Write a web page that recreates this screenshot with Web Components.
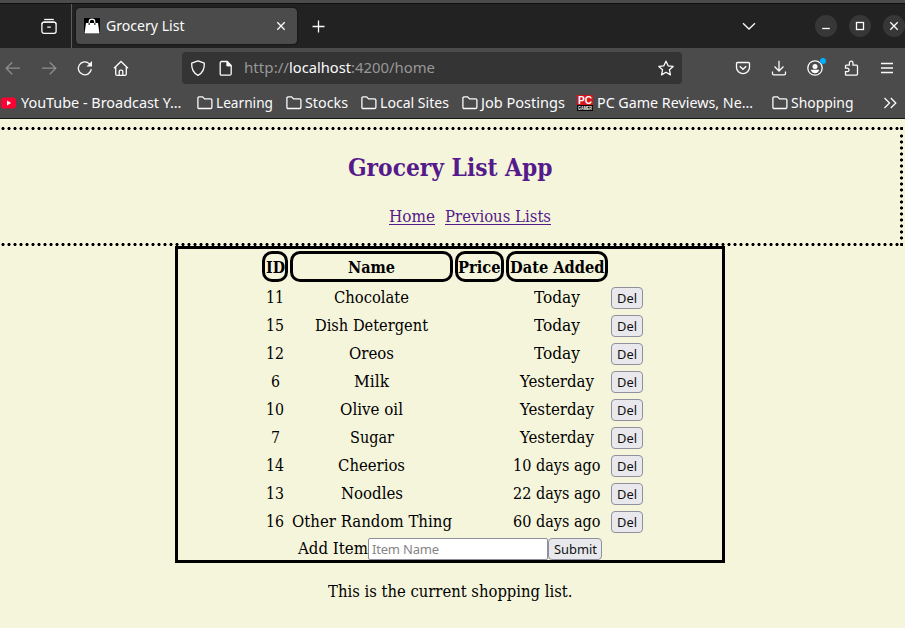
<!DOCTYPE html>
<html lang="en">
<head>
<meta charset="utf-8">
<title>Grocery List</title>
<style>
html,body{margin:0;height:100%;overflow:hidden;background:#f5f5dc}
</style>
</head>
<body>
<browser-window></browser-window>
<script>
const ICONS = {
  view: '<path d="M3.2 1.5h9.6"/><rect x=".9" y="4.2" width="14.2" height="11.1" rx="2"/><path d="M6.2 9.2h3.6M1 6.2Q1.2 4.2 3 4.2h10q1.800 0 2 2"/>',
  bag: '<rect width="16" height="16" fill="#000" stroke="none"/><path d="M2 5h12l1.500 10.500H.5z" fill="#fff" stroke="none"/><path d="M5.200 6.500V4a2.800 2.800 0 0 1 5.600 0v2.500" stroke="#fff" stroke-width="1.200"/><path d="M5.200 5.300v1.400M10.800 5.300v1.400" stroke="#000" stroke-width="1.400"/>',
  close: '<path d="M4.300 4.300l7.400 7.400M11.700 4.300l-7.400 7.400"/>',
  plus: '<path d="M8.500 2.500v12M2.500 8.500h12"/>',
  chev: '<path d="M2 5.300l6 5.700 6-5.700"/>',
  min: '<path d="M4.200 10.500h7.600"/>',
  max: '<rect x="4.500" y="4.500" width="7" height="7"/>',
  back: '<path d="M15 8.200H1.500M7.200 2.200l-6 6 6 6"/>',
  fwd: '<path d="M1 8.200h13.500M8.800 2.200l6 6-6 6"/>',
  reload: '<path d="M14.300 9.200A6.500 6.500 0 1 1 12.300 3.600L14 5.300"/><path d="M15 1v5.500H9.500z" fill="currentColor" stroke="none"/>',
  home: '<path d="M1 8.300L8 1.500l7 6.800M2.700 7v6.900q0 1.400 1.400 1.400h7.800q1.400 0 1.400-1.400V7M6.200 15v-3.600q0-1.300 1.300-1.300h1q1.300 0 1.300 1.300V15"/>',
  shield: '<path d="M8 .9L14.300 3.200q.5 8.600-6.300 12.100Q1.200 11.800 1.700 3.200z" stroke-linejoin="round"/>',
  page: '<path d="M3.700 1.500h5.500l4 4v8.200q0 1.500-1.500 1.500h-8q-1.500 0-1.500-1.500V3q0-1.500 1.500-1.500z"/><path d="M8.800 1.500v4.500h4.400z" fill="currentColor" stroke-width=".8"/>',
  star: '<path d="M8 1.200l2.150 4.600 5 .6-3.700 3.450 1 5L8 12.300l-4.450 2.550 1-5L.850 6.400l5-.6z" stroke-linejoin="round"/>',
  pocket: '<path d="M2.500 2.500h11q1 0 1 1v3.700a6.500 6.500 0 0 1-13 0V3.500q0-1 1-1z"/><path d="M4.800 6.300L8 9.300l3.200-3" stroke-width="1.500"/>',
  download: '<path d="M8 .8v10M3.500 6.500L8 11l4.500-4.500M1.500 11.500v1.900q0 1.400 1.400 1.400h10.200q1.400 0 1.400-1.400v-1.900"/>',
  account: '<circle cx="8" cy="8" r="7.200"/><circle cx="8" cy="6.400" r="2.500" fill="currentColor" stroke="none"/><path d="M3.700 9.700h8.600Q11 13.200 8 13.200T3.700 9.700z" fill="currentColor" stroke="none"/><circle cx="16" cy="1" r="3" fill="#00aefc" stroke="none"/>',
  puzzle: '<path d="M3 15.200q-.5 0-.5-.6v-3h1.800a1.700 1.700 0 0 0 0-3.400H2.500V6q0-.9.900-.9h3V3a1.800 1.800 0 0 1 3.600 0v2.100h3.500q1 0 1 1v8q0 1-1 1z"/>',
  menu: '<path d="M2 3.500h12M2 8h12M2 12.500h12"/>',
  folder: '<path d="M2.200 1.900h3.400l2 2h6q1.300 0 1.300 1.300v7q0 1.300-1.300 1.300H2.200Q.9 13.500.9 12.200v-9Q.9 1.900 2.200 1.900z"/>',
  more: '<path d="M2.500 3l5 5-5 5M8.800 3l5 5-5 5"/>',
  youtube: '<rect x="0" y="2.500" width="15" height="11" rx="3" fill="#ff0033" stroke="none"/><path d="M6 5.600L10.200 8 6 10.400z" fill="#fff" stroke="none"/>'
};

class UiIcon extends HTMLElement {
  connectedCallback() {
    this.attachShadow({mode:'open'}).innerHTML = `<style>:host{display:block;flex:none;width:16px;height:16px}svg{display:block;overflow:visible}</style>
    <svg width="16" height="16" viewBox="0 0 16 16" fill="none" stroke="currentColor" stroke-width="1.3">${ICONS[this.getAttribute('name')]}</svg>`;
  }
}
customElements.define('ui-icon', UiIcon);

/* One line of text set to an exact measure. */
class FitText extends HTMLElement {
  connectedCallback() {
    const r = this.attachShadow({mode:'open'});
    r.innerHTML = `<style>:host{display:inline-block;flex:none;white-space:nowrap;text-align:left}span{display:inline-block;transform-origin:0 50%}</style><span><slot></slot></span>`;
    const w = +this.getAttribute('w'), s = r.querySelector('span');
    const n = s.getBoundingClientRect().width;
    this.style.width = w + 'px';
    if (n) s.style.transform = `scaleX(${w / n})`;
  }
}
customElements.define('fit-text', FitText);

class BrowserTabs extends HTMLElement {
  connectedCallback() {
    this.attachShadow({mode:'open'}).innerHTML = `<style>
    :host{display:flex;align-items:center;background:#222;border-top:1px solid #0f0f0f;box-sizing:border-box;height:45px;color:#fbfbfe;margin-top:3px}
    .view{margin:0 14px 0 41px}
    .sep{width:1px;height:44px;background:#5c5c5c;margin-right:4px}
    .tab{display:flex;align-items:center;width:221px;height:36px;box-sizing:border-box;background:#4b4b4b;border-radius:4px;padding:0 8px;box-shadow:0 0 2px #000;font-size:14.5px}
    .tab fit-text{margin-left:5.5px;margin-right:auto;padding-bottom:2px}
    .plus{margin-left:13px}
    .chev{margin-left:auto;margin-right:58px}
    .ctl{display:flex;gap:12px;width:90px}
    .ctl div{width:22px;height:22px;flex:none;border-radius:50%;background:#373737;display:grid;place-items:center}
    </style><ui-icon class="view" name="view"></ui-icon><div class="sep"></div>
    <div class="tab"><ui-icon name="bag"></ui-icon><fit-text w="78.500">Grocery List</fit-text><ui-icon name="close"></ui-icon></div>
    <ui-icon class="plus" name="plus"></ui-icon><ui-icon class="chev" name="chev"></ui-icon>
    <div class="ctl"><div><ui-icon name="min"></ui-icon></div><div><ui-icon name="max"></ui-icon></div><div><ui-icon name="close"></ui-icon></div></div>`;
  }
}
customElements.define('browser-tabs', BrowserTabs);

class NavBar extends HTMLElement {
  connectedCallback() {
    this.attachShadow({mode:'open'}).innerHTML = `<style>
    :host{display:flex;height:40px;align-items:center;color:#fbfbfe;padding:0 10px 0 5px;box-sizing:border-box}
    .g{display:flex;gap:20px}.dim{color:#8e8e8e}
    .url{display:flex;align-items:center;width:500px;height:32px;box-sizing:border-box;margin:0 auto 0 53px;padding:0 8px;background:#343434;border-radius:4px;font-size:14.5px}
    .url ui-icon+ui-icon{margin:0 10px 0 12px}
    .addr{display:flex;color:#979797;margin-right:auto;padding-bottom:2px}.addr .h{color:#fbfbfe}
    </style><div class="g"><ui-icon class="dim" name="back"></ui-icon><ui-icon class="dim" name="fwd"></ui-icon><ui-icon name="reload"></ui-icon><ui-icon name="home"></ui-icon></div>
    <div class="url"><ui-icon name="shield"></ui-icon><ui-icon name="page"></ui-icon><div class="addr"><fit-text w="45">http://</fit-text><fit-text class="h" w="62">localhost</fit-text><fit-text w="84">:4200/home</fit-text></div><ui-icon name="star"></ui-icon></div>
    <div class="g"><ui-icon name="pocket"></ui-icon><ui-icon name="download"></ui-icon><ui-icon name="account"></ui-icon><ui-icon name="puzzle"></ui-icon><ui-icon name="menu"></ui-icon></div>`;
  }
}
customElements.define('nav-bar', NavBar);

class PcBadge extends HTMLElement {
  connectedCallback() {
    this.attachShadow({mode:'open'}).innerHTML = `<style>:host{display:block;width:16px;height:16px;flex:none;background:linear-gradient(#d8141c 10.500px,#080808 10.500px);color:#fff;font-weight:bold;font-family:"Liberation Sans",sans-serif}
    div{display:flex;justify-content:center}.a{font-size:11px;line-height:11px;height:11px}.b{font-size:4.500px;line-height:5px;height:5px}</style><div class="a"><fit-text w="14">PC</fit-text></div><div class="b"><fit-text w="14">GAMER</fit-text></div>`;
  }
}
customElements.define('pc-badge', PcBadge);

class BookmarkItem extends HTMLElement {
  connectedCallback() {
    const i = this.getAttribute('icon') || 'folder';
    this.attachShadow({mode:'open'}).innerHTML = `<style>:host{display:flex;align-items:center;gap:${i === 'folder' ? 3 : 3.5}px;flex:none;width:var(--w)}fit-text{padding-bottom:2px}</style>
    ${i === 'pc' ? '<pc-badge></pc-badge>' : `<ui-icon name="${i}"></ui-icon>`}<fit-text w="${this.getAttribute('w')}">${this.getAttribute('label')}</fit-text>`;
  }
}
customElements.define('bookmark-item', BookmarkItem);

class BookmarksBar extends HTMLElement {
  connectedCallback() {
    const items = [['YouTube - Broadcast Y…',160.5,195.5,'youtube'],['Learning',57,89],['Stocks',43,75],['Local Sites',69,101],['Job Postings',84,115.5],['PC Game Reviews, Ne…',156,194.5,'pc'],['Shopping',62.5,110.5]];
    this.attachShadow({mode:'open'}).innerHTML = `<style>:host{display:flex;align-items:center;height:30px;font-size:14.5px;color:#fbfbfe;padding-left:1px;box-sizing:border-box}</style>`
      + items.map(([l,w,p,i]) => `<bookmark-item label="${l}" w="${w}" icon="${i||''}" style="--w:${p}px"></bookmark-item>`).join('') + '<ui-icon name="more"></ui-icon>';
  }
}
customElements.define('bookmarks-bar', BookmarksBar);

class SiteHeader extends HTMLElement {
  connectedCallback() {
    this.attachShadow({mode:'open'}).innerHTML = `<style>
    :host{display:block;height:119px;margin-top:8px;width:903px;box-sizing:border-box;color:#551a8b;padding-top:23px;
      --d:radial-gradient(circle at 3px 1.5px,#000 1.25px,transparent 1.9px);
      background:radial-gradient(circle at 1.5px 1.5px,#000 1.25px,transparent 1.9px) 900px 0/3px 3px no-repeat,
      radial-gradient(circle at 1.5px 1.5px,#000 1.25px,transparent 1.9px) 900px 116px/3px 3px no-repeat,
      var(--d) 0 0/6px 3px repeat-x,var(--d) 0 116px/6px 3px repeat-x}
    :host{position:relative}
    .edge{position:absolute;right:0;top:6px;width:3px;height:108px;background:radial-gradient(circle at 1.5px 3px,#000 1.25px,transparent 1.9px) 0 0/3px 6px repeat-y}
    h1{margin:0;width:900px;text-align:center;font-size:23.5px;line-height:36px;height:36px}
    nav{display:flex;gap:10px;margin:21px 0 0 389px;line-height:20px}
    a{display:block;height:17px;border-bottom:1px solid #551a8b}
    </style><div class="edge"></div><h1><fit-text w="204.500">Grocery List App</fit-text></h1><nav><a><fit-text w="46">Home</fit-text></a><a><fit-text w="106">Previous Lists</fit-text></a></nav>`;
  }
}
customElements.define('site-header', SiteHeader);

class SmallButton extends HTMLElement {
  connectedCallback() {
    this.attachShadow({mode:'open'}).innerHTML = `<style>:host{display:inline-flex;align-items:center;justify-content:center;box-sizing:border-box;height:22px;background:#e9e9ed;border:1px solid #8f8f9d;border-radius:4px;font:13px/20px "Noto Sans",sans-serif;color:#111}</style><slot></slot>`;
  }
}
customElements.define('small-button', SmallButton);

class GroceryTable extends HTMLElement {
  connectedCallback() {
    const rows = [[11,'Chocolate',75,'Today',46],[15,'Dish Detergent',113,'Today',46],[12,'Oreos',45,'Today',46],[6,'Milk',35,'Yesterday',74],[10,'Olive oil',63,'Yesterday',74],[7,'Sugar',44,'Yesterday',74],[14,'Cheerios',67,'10 days ago',87.5],[13,'Noodles',62,'22 days ago',87.5],[16,'Other Random Thing',160,'60 days ago',87.5]];
    this.attachShadow({mode:'open'}).innerHTML = `<style>
    :host{display:block;box-sizing:border-box;width:550px;height:317px;margin-left:175px;border:3px solid #000;padding:2px 0 0 84px}
    .row{display:grid;grid-template-columns:26px 163px 49px 102px 34px;column-gap:2px;height:26px;margin-bottom:2px;text-align:center;line-height:28px}
    .head{height:31px;font-weight:bold}
    .head div{height:31px;box-sizing:border-box;border:3px solid #000;border-radius:10px;line-height:28px;display:flex;justify-content:center}
    small-button{width:32px;margin:3px 0 0 1px}
    form{display:flex;margin:4px 0 0 36px;line-height:21px;height:22px}
    input{width:180px;height:22px;box-sizing:border-box;border:1px solid #8f8f9d;border-radius:2px;padding:0 3px;background:#fff;font:13px "Noto Sans",sans-serif;outline:0}
    input::placeholder{color:#858585;letter-spacing:-.2px}
    form small-button{width:54px;margin:0}
    </style><div class="row head"><div><fit-text w="19">ID</fit-text></div><div><fit-text w="47">Name</fit-text></div><div><fit-text w="42.500">Price</fit-text></div><div><fit-text w="94.500">Date Added</fit-text></div></div>`
    + rows.map(([i,n,w,d,v]) => `<div class="row"><div><fit-text w="${i>9?18:9}">${i}</fit-text></div><div><fit-text w="${w}">${n}</fit-text></div><div></div><div><fit-text w="${v}">${d}</fit-text></div><small-button><fit-text w="20">Del</fit-text></small-button></div>`).join('')
    + `<form><fit-text w="70">Add Item</fit-text><input placeholder="Item Name"><small-button><fit-text w="43">Submit</fit-text></small-button></form>`;
  }
}
customElements.define('grocery-table', GroceryTable);

class BrowserWindow extends HTMLElement {
  connectedCallback() {
    this.attachShadow({mode:'open'}).innerHTML = `<style>
    :host{display:flow-root;width:905px;height:628px;background:#f5f5dc;overflow:hidden}
    .chrome{display:flow-root;background:#4b4b4b;height:118px;border-bottom:1px solid #151515;font-family:"Noto Sans",sans-serif}
    main{display:flow-root;font:16px "DejaVu Serif Condensed","DejaVu Serif",serif;color:#000}
    p{margin:16px 0 0;width:900px;text-align:center;line-height:26px}
    </style><div class="chrome"><browser-tabs></browser-tabs><nav-bar></nav-bar><bookmarks-bar></bookmarks-bar></div>
    <main><site-header></site-header><grocery-table></grocery-table><p><fit-text w="244.500">This is the current shopping list.</fit-text></p>
    </main>`;
  }
}
customElements.define('browser-window', BrowserWindow);
</script>
</body>
</html>
